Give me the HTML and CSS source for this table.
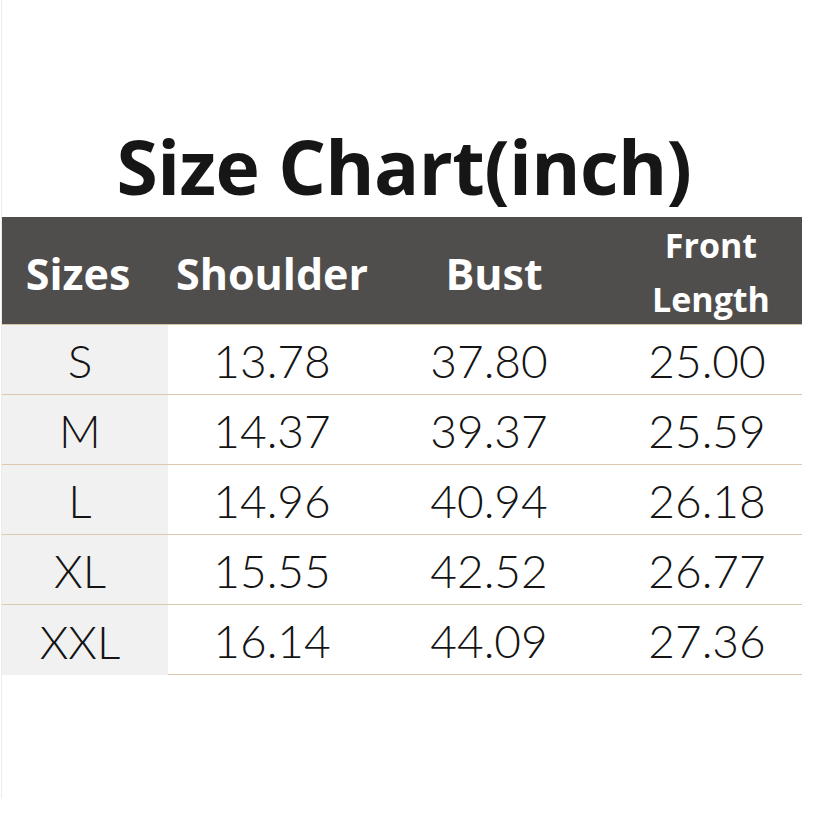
FILE: index.html
```html
<!DOCTYPE html>
<html>
<head>
<meta charset="utf-8">
<link rel="stylesheet" href="styles.css">
</head>
<body>
<div class="page">
  <h1 class="title">Size Chart(inch)</h1>
  <div class="chart">
    <div class="head first">Sizes</div>
    <div class="head c2">Shoulder</div>
    <div class="head c3 bust">Bust</div>
    <div class="head c4 small">Front<br>Length</div>

    <div class="cell first">S</div><div class="cell c2">13.78</div><div class="cell c3">37.80</div><div class="cell c4">25.00</div>
    <div class="cell first">M</div><div class="cell c2">14.37</div><div class="cell c3">39.37</div><div class="cell c4">25.59</div>
    <div class="cell first">L</div><div class="cell c2">14.96</div><div class="cell c3">40.94</div><div class="cell c4">26.18</div>
    <div class="cell first">XL</div><div class="cell c2">15.55</div><div class="cell c3">42.52</div><div class="cell c4">26.77</div>
    <div class="cell first last">XXL</div><div class="cell c2 last">16.14</div><div class="cell c3 last">44.09</div><div class="cell c4 last">27.36</div>
  </div>
</div>
</body>
</html>
```
FILE: styles.css
```css
html, body {
  margin: 0;
  padding: 0;
  background: #ffffff;
}
.page {
  width: 825px;
  height: 798px;
  margin-left: 1px;
  border-left: 1px solid #ececec;
  box-sizing: border-box;
  padding-top: 122px;
}
.title {
  margin: 0;
  height: 95px;
  text-align: center;
  font-family: "Open Sans", sans-serif;
  font-weight: 700;
  font-size: 75px;
  line-height: 88px;
  color: #161616;
  letter-spacing: -0.6px;
  padding-right: 20px;
}
.chart {
  display: grid;
  grid-template-columns: 166px 210px 222px 202px;
  grid-template-rows: 108px repeat(5, 70px);
  width: 800px;
}
.head {
  background: #504e4d;
  color: #ffffff;
  font-family: "Open Sans", sans-serif;
  font-weight: 700;
  font-size: 43px;
  display: flex;
  align-items: center;
  justify-content: center;
  border-bottom: 1px solid #d8c2a4;
  box-sizing: border-box;
  padding-top: 6px;
}
.head.first {
  padding-right: 14px;
}
.head.bust {
  padding-left: 10px;
}
.head.small {
  font-size: 34px;
  line-height: 54px;
  text-align: center;
  padding-top: 2px;
  padding-left: 20px;
}
.cell {
  display: flex;
  align-items: center;
  justify-content: center;
  font-family: "Lato", sans-serif;
  font-weight: 300;
  font-size: 46px;
  color: #141414;
  border-bottom: 1px solid #dcc8ae;
  box-sizing: border-box;
  padding-top: 2px;
}
.first {
  padding-right: 10px;
}
.cell.first {
  background: #f1f1f1;
}
.cell.first.last {
  border-bottom: none;
}
.c2 {
  padding-right: 2px;
}
.c4 {
  padding-left: 12px;
}
```
